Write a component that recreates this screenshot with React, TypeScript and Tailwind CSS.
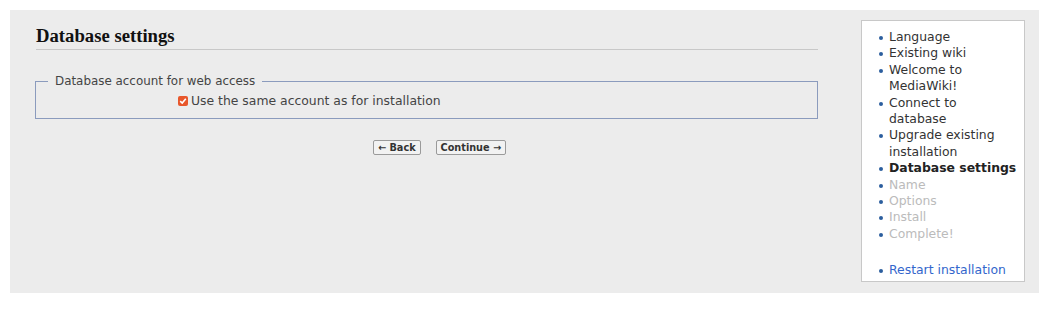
import React from "react";

const Dot = () => (
  <span className="absolute left-[-10px] top-[7px] w-[4px] h-[4px] rounded-full bg-[#2b5e9e]" />
);

function Item({ children, cls = "" }: { children: React.ReactNode; cls?: string }) {
  return (
    <li className={"relative " + cls}>
      <Dot />
      {children}
    </li>
  );
}

export default function App() {
  return (
    <div className="bg-white p-[10px] pb-[21px] font-['DejaVu_Sans',sans-serif] text-[12px] text-[#333]">
      <div className="flex bg-[#ececec] h-[283px]">
        <div className="flex-1 pl-[26px] pt-[16px]">
          <h2 className="font-['Liberation_Serif',serif] font-bold text-[18.7px] leading-[20px] text-[#111] pb-[3px] border-b border-[#c8c8c8]">
            Database settings
          </h2>
          <fieldset className="mt-[24px] border border-[#8b9bbd] pl-[12px] pb-[10px] -ml-[1px]">
            <legend className="px-[7px] text-[11.9px] leading-[14px] text-[#444]">
              Database account for web access
            </legend>
            <label className="flex items-center pl-[130px] pt-[6px] text-[12.4px] leading-[14px] text-[#444]">
              <span className="w-[10px] h-[10px] rounded-[2px] bg-[#e8572b] flex items-center justify-center mr-[3px]">
                <svg width="8" height="8" viewBox="0 0 8 8">
                  <path d="M1.2 4.2 L3.2 6 L6.8 1.8" stroke="white" strokeWidth="1.6" fill="none" />
                </svg>
              </span>
              Use the same account as for installation
            </label>
          </fieldset>
          <div className="flex gap-[15px] pl-[337px] mt-[21px]">
            <button className="h-[15px] px-[4px] border border-[#9a9a9a] rounded-[2px] bg-[#f2f2f2] text-[9.7px] font-bold leading-[12px] text-[#333]">
              ← Back
            </button>
            <button className="h-[15px] px-[4px] border border-[#9a9a9a] rounded-[2px] bg-[#f2f2f2] text-[9.7px] font-bold leading-[12px] text-[#333]">
              Continue →
            </button>
          </div>
        </div>
        <div className="ml-[43px] mr-[14px] mt-[10px] mb-[11px] w-[164px] bg-white border border-[#c8c8c8] pt-[8px] pl-[27px] pr-[4px]">
          <ul className="text-[12.4px] leading-[16.4px] text-[#333]">
            <Item>Language</Item>
            <Item>Existing wiki</Item>
            <Item>Welcome to<br />MediaWiki!</Item>
            <Item>Connect to<br />database</Item>
            <Item>Upgrade existing<br />installation</Item>
            <Item cls="font-bold text-[#222]">Database settings</Item>
            <Item cls="text-[#bbb]">Name</Item>
            <Item cls="text-[#bbb]">Options</Item>
            <Item cls="text-[#bbb]">Install</Item>
            <Item cls="text-[#bbb]">Complete!</Item>
            <Item cls="mt-[19.5px] text-[#3366cc]">Restart installation</Item>
          </ul>
        </div>
      </div>
    </div>
  );
}
